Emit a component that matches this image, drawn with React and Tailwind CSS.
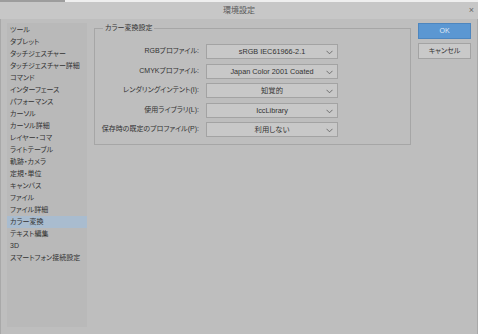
import React from 'react';

const menuItems = [
  'ツール', 'タブレット', 'タッチジェスチャー', 'タッチジェスチャー詳細', 'コマンド',
  'インターフェース', 'パフォーマンス', 'カーソル', 'カーソル詳細', 'レイヤー・コマ',
  'ライトテーブル', '軌跡・カメラ', '定規・単位', 'キャンバス', 'ファイル',
  'ファイル詳細', 'カラー変換', 'テキスト編集', '3D', 'スマートフォン接続設定',
];

const rows = [
  { label: 'RGBプロファイル:', value: 'sRGB IEC61966-2.1' },
  { label: 'CMYKプロファイル:', value: 'Japan Color 2001 Coated' },
  { label: 'レンダリングインテント(I):', value: '知覚的' },
  { label: '使用ライブラリ(L):', value: 'IccLibrary' },
  { label: '保存時の既定のプロファイル(P):', value: '利用しない' },
];

const Chevron = () => (
  <svg width="7" height="5" viewBox="0 0 7 5" className="absolute right-[4px] top-[5px]">
    <path d="M0.5 0.8 L3.5 3.8 L6.5 0.8" fill="none" stroke="#5a5a5a" strokeWidth="0.8" />
  </svg>
);

export default function App() {
  const selected = 'カラー変換';
  return (
    <div className="w-[478px] h-[334px] overflow-hidden bg-[#bebebe] text-[#333333] font-['Liberation_Sans','Noto_Sans_CJK_JP',sans-serif] [font-feature-settings:'palt'] text-[7px]">
      {/* top strip */}
      <div className="flex h-[2px]">
        <div className="w-[65px] bg-[#9d9d9d]" />
        <div className="flex-1 bg-[#efefef]" />
      </div>

      {/* title bar */}
      <div className="relative h-[17px] bg-[#c7c7c7] flex items-center justify-center text-[8px] text-[#5a5a5a]">
        環境設定
        <span className="absolute right-[4px] top-[3px] text-[9px] leading-[10px] text-[#6a6a6a]">×</span>
      </div>

      <div className="flex h-[315px] border-x border-[#a9a9a9]">
        {/* sidebar */}
        <div className="ml-[6px] mt-[4px] w-[80px] h-[304px] bg-[#b9b9b9] pt-[1px]">
          {menuItems.map((item) => (
            <div
              key={item}
              className={`h-[12px] leading-[12px] pl-[3px] whitespace-nowrap ${item === selected ? 'bg-[#a9bccf]' : ''}`}
            >
              {item}
            </div>
          ))}
        </div>

        {/* main group */}
        <fieldset className="ml-[7px] mt-[3px] w-[317px] h-[123px] border border-[#a6a6a6] px-[5px]">
          <legend className="ml-[3px] px-[2px] leading-[12px]">カラー変換設定</legend>
          <div className="mt-[10px] flex flex-col gap-[4.5px]">
            {rows.map((r) => (
              <div key={r.label} className="flex items-center h-[15px]">
                <div className="w-[99px] text-right whitespace-nowrap">{r.label}</div>
                <div className="relative ml-[7px] w-[132px] h-[15px] bg-[#c8c8c8] border border-[#a3a3a3] text-center leading-[13px] text-[7.3px]">
                  {r.value}
                  <Chevron />
                </div>
              </div>
            ))}
          </div>
        </fieldset>

        {/* buttons */}
        <div className="ml-[7px] mt-[4px] flex flex-col gap-[4px]">
          <div className="w-[53px] h-[16px] bg-[#5b97d2] border border-[#4d86bf] text-[#dfe9f4] flex items-center justify-center">
            OK
          </div>
          <div className="w-[53px] h-[16px] bg-[#c9c9c9] border border-[#a3a3a3] flex items-center justify-center">
            キャンセル
          </div>
        </div>
      </div>
    </div>
  );
}
